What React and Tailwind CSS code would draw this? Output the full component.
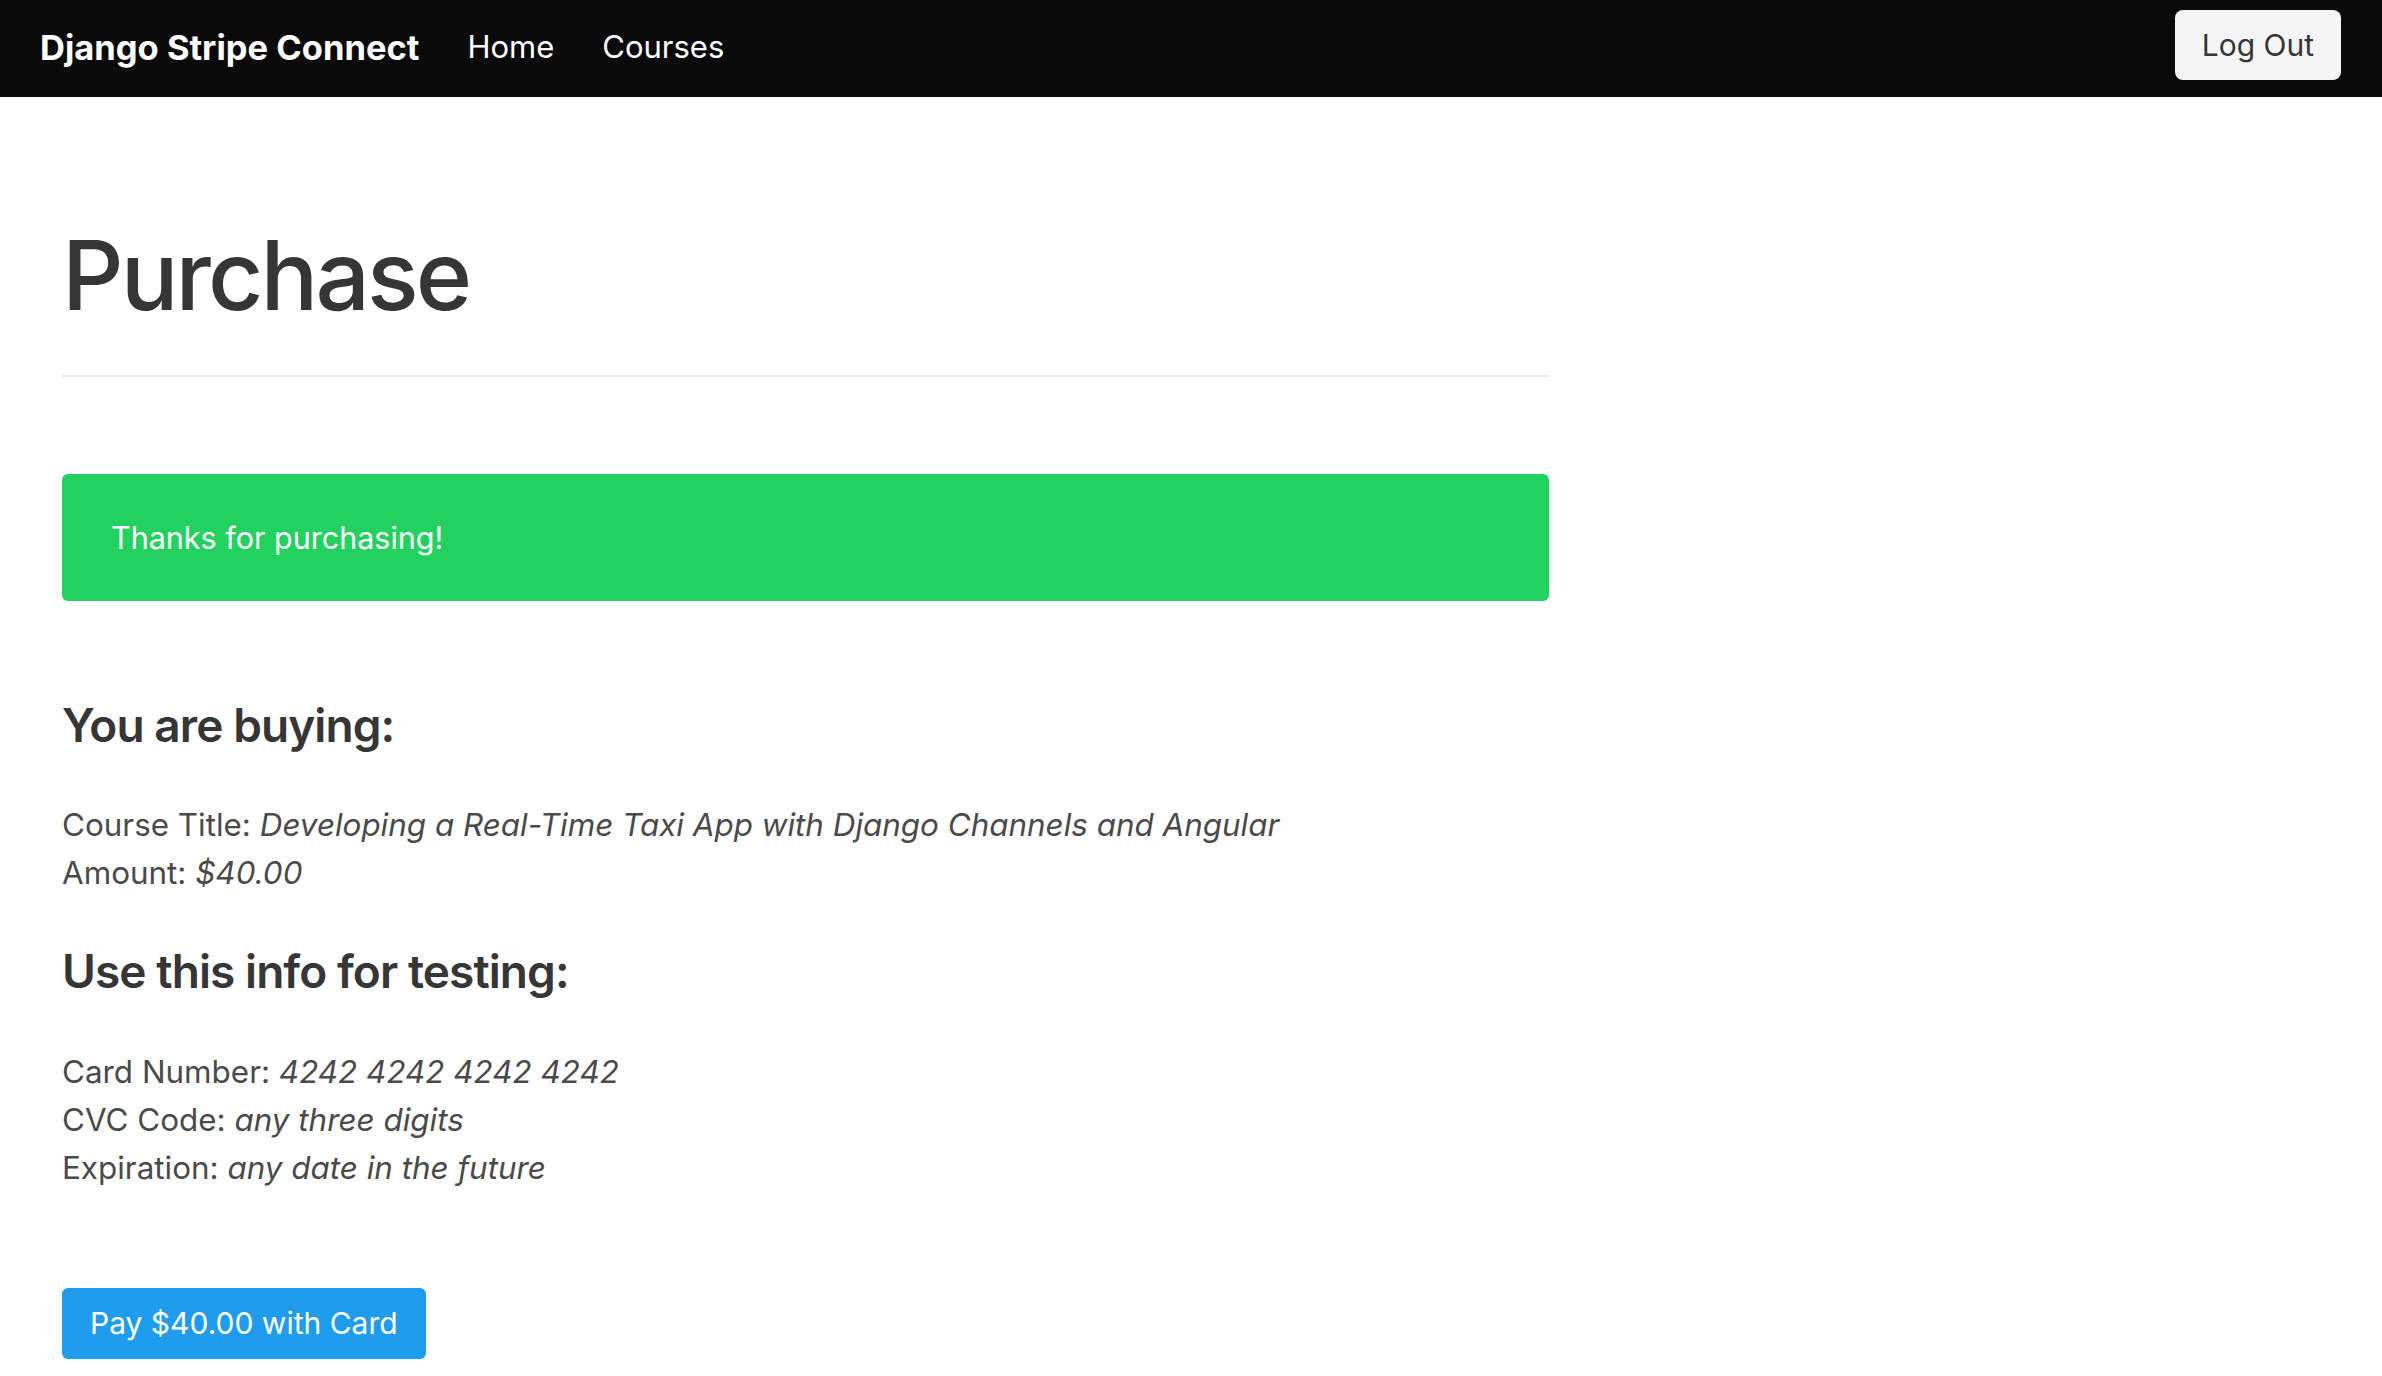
export default function App() {
    return (
        <div className="min-h-screen bg-white font-['Inter','Noto_Sans',sans-serif] text-[#4a4a4a]">
            <nav className="h-[97px] bg-[#0a0a0a] flex items-center justify-between pl-[40px] pr-[41px]">
                <div className="flex items-center -mt-[2px]">
                    <a className="text-white font-bold text-[34.5px] mr-[48px]">Django Stripe Connect</a>
                    <a className="text-white text-[31px] mr-[48px]">Home</a>
                    <a className="text-white text-[31px]">Courses</a>
                </div>
                <button className="self-start mt-[10px] h-[70px] px-[27px] rounded-[8px] bg-[#f5f5f5] text-[#363636] text-[30px]">Log Out</button>
            </nav>

            <main className="pl-[62px] w-[1549px]">
                <h1 className="mt-[121px] text-[96px] leading-[1.2] font-medium tracking-[-0.03em] text-[#363636]">Purchase</h1>
                <hr className="mt-[42px] border-0 h-[2px] bg-[#ececec]" />

                <div className="mt-[97px] h-[127px] rounded-[6px] bg-[#23d160] flex items-center pl-[49px] text-white text-[30.5px]">
                    Thanks for purchasing!
                </div>

                <h3 className="mt-[97px] text-[46px] leading-[1.2] font-semibold tracking-[-0.02em] text-[#363636]">You are buying:</h3>
                <div className="mt-[48px] text-[31.4px] leading-[48px]">
                    <p>Course Title: <em>Developing a Real-Time Taxi App with Django Channels and Angular</em></p>
                    <p>Amount: <em>$40.00</em></p>
                </div>

                <h3 className="mt-[47px] text-[46px] leading-[1.2] font-semibold tracking-[-0.02em] text-[#363636]">Use this info for testing:</h3>
                <div className="mt-[48px] text-[31.4px] leading-[48px]">
                    <p>Card Number: <em>4242 4242 4242 4242</em></p>
                    <p>CVC Code: <em>any three digits</em></p>
                    <p>Expiration: <em>any date in the future</em></p>
                </div>

                <button className="mt-[96px] h-[71px] px-[28px] rounded-[6px] bg-[#209cee] text-white text-[30px]">Pay $40.00 with Card</button>
            </main>
        </div>
    );
}
